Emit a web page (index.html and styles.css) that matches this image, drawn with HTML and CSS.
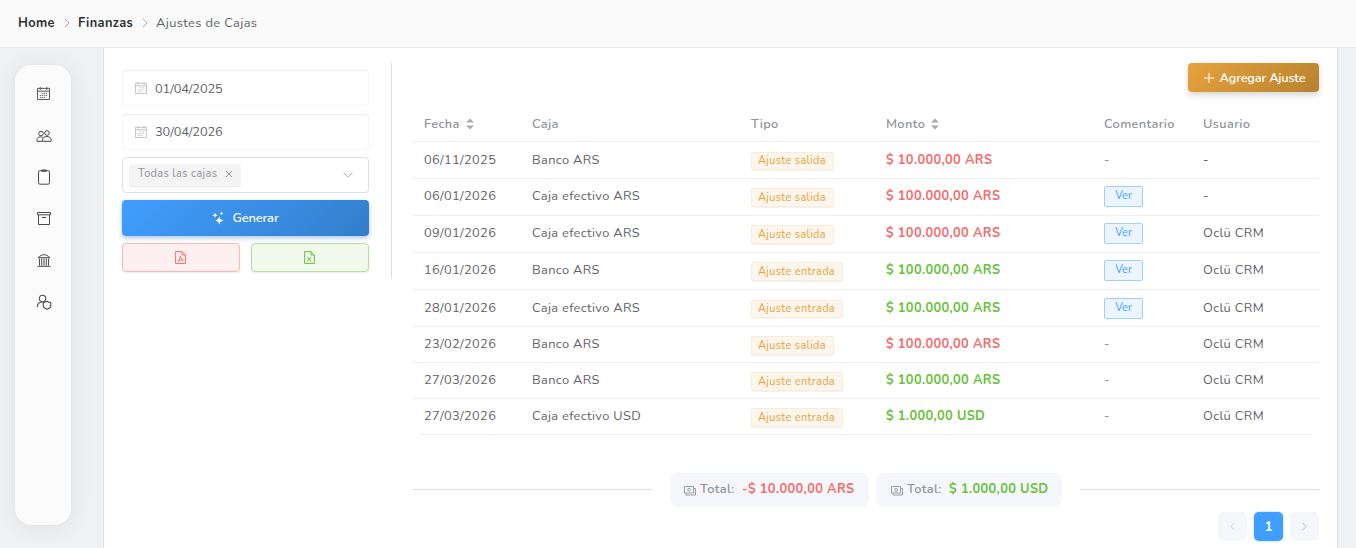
FILE: index.html
```html
<!DOCTYPE html>
<html lang="es">
<head>
<meta charset="utf-8">
<title>Ajustes de Cajas</title>
<link rel="stylesheet" href="styles.css">
</head>
<body>
<svg class="defs" width="0" height="0">
  <symbol id="cal" viewBox="0 0 14 14"><path d="M.5 1.500h13v12H.5zM.5 4.500h13M3.500 0v3M10.500 0v3" fill="none" stroke="currentColor"/><path d="M5 6.800h6.500M3 9h8.500M3 11.200h6.500" fill="none" stroke="currentColor" stroke-dasharray="1.3 .9"/></symbol>
  <symbol id="next" viewBox="0 0 6 10"><path d="M.8.8 5 5 .8 9.200" fill="none" stroke="currentColor"/></symbol>
  <symbol id="cash" viewBox="0 0 12 10"><path d="M.5.5h9v6.500h-9zM10 2.500h1.500v6.500h-9.500v-1.500" fill="none" stroke="currentColor" stroke-width=".9"/><circle cx="5" cy="3.700" r="1.400" fill="none" stroke="currentColor" stroke-width=".9"/></symbol>
  <symbol id="sort" viewBox="0 0 8 12"><path d="M0 4.600 4 .4l4 4.200zM0 7.400h8L4 11.600z" fill="#a8abb2"/></symbol>
</svg>
<header class="topbar">
  <nav class="crumbs">
    <b class="home">Home</b><svg class="sep"><use href="#next"/></svg>
    <b class="fin">Finanzas</b><svg class="sep"><use href="#next"/></svg>
    <span class="current">Ajustes de Cajas</span>
  </nav>
</header>
<div class="shell">
  <aside class="sidebar">
    <svg viewBox="0 0 14 14"><use href="#cal"/></svg>
    <svg class="wide" viewBox="0 0 16 14"><g fill="none" stroke="currentColor"><circle cx="5" cy="4.500" r="2.300"/><circle cx="11" cy="4" r="2.300"/><path d="M6.500 12.300H1v-1.500C1 8.800 2.500 7.800 4.500 7.800c1 0 1.700.2 2.300.7M6.500 12.300h8.700v-1C15.200 9 13.700 7.500 11 7.500s-4.500 1.500-4.500 3.700z"/></g></svg>
    <svg class="tall" viewBox="0 0 14 16"><rect x="1.500" y="1.700" width="11" height="13.500" rx="1.500" fill="none" stroke="currentColor"/><path d="M4.500.5h5v2.300h-5z" fill="currentColor"/></svg>
    <svg viewBox="0 0 14 14"><path d="M.5.500h13v2.300H.5zM1.500 3v9.500h11V3M5 5.500h4" fill="none" stroke="currentColor"/></svg>
    <svg viewBox="0 0 14 14"><path d="M1 3.700C3 1.800 5 .8 7 .6c2 .2 4 1.200 6 3.100zM.5 12.300h13M2.500 4.500v7M4.700 4.500v7M7 4.500v7M9.300 4.500v7M11.500 4.500v7" fill="none" stroke="currentColor"/></svg>
    <svg class="wide" viewBox="0 0 16 16"><path d="M1.300 13C1.300 9.500 3.500 8 6 8M14.800 8.500v2.800c0 2-1.500 3.200-3.800 4-2.300-.8-3.800-2-3.800-4V8.500c1.500 0 2.600-.5 3.800-1.300 1.200.8 2.300 1.300 3.800 1.300z" fill="none" stroke="currentColor" stroke-width="1.100"/><circle cx="6.500" cy="4.500" r="3.200" fill="none" stroke="currentColor" stroke-width="1.100"/></svg>
  </aside>
  <main class="card">
    <section class="filters">
      <div class="field soft"><svg class="calicon"><use href="#cal"/></svg><span class="date">01/04/2025</span></div>
      <div class="field soft"><svg class="calicon"><use href="#cal"/></svg><span class="date">30/04/2026</span></div>
      <div class="field select"><span class="chip"><span class="chiptext">Todas las cajas</span><svg class="x" viewBox="0 0 8 8"><path d="m1 1 6 6M7 1 1 7" stroke="currentColor"/></svg></span><svg class="down" viewBox="0 0 10 6"><path d="M.5.6 5 5.200 9.500.6" fill="none" stroke="currentColor"/></svg></div>
      <button class="generate"><svg viewBox="0 0 12 14"><path d="M7.300 5.500 8.500 8.300 11.500 9.500 8.500 10.700 7.300 13.500 6.100 10.700 3.300 9.500 6.100 8.300zM3 1.500l.8 2 2 .8-2 .8-.8 2-.8-2-2-.8 2-.8zM9.500.5l.6 1.400 1.400.6-1.400.6-.6 1.400-.6-1.400-1.400-.6 1.400-.6z" fill="currentColor"/></svg><span>Generar</span></button>
      <div class="exports">
        <button class="pdf"><svg viewBox="0 0 11 13"><path d="M.6.600h6.400l3.400 3.400v8.400H.6zM7 .600V4h3.400M3 10.300C4.500 9 5.300 7 5.300 4.800c.3 2.200 1.300 3.700 3 4.200-2 0-3.700.3-5.300 1.300" fill="none" stroke="currentColor"/></svg></button>
        <button class="xls"><svg viewBox="0 0 11 13"><path d="M.6.600h6.400l3.400 3.400v8.400H.6zM7 .600V4h3.400M3.300 5.800l4 4.500M7.300 5.800l-4 4.500" fill="none" stroke="currentColor"/></svg></button>
      </div>
    </section>
    <section class="content">
      <button class="add"><svg viewBox="0 0 10 10"><path d="M5 0v10M0 5h10" stroke="currentColor"/></svg><span>Agregar Ajuste</span></button>
      <div class="table">
        <div class="row head"><span>Fecha<svg class="sort"><use href="#sort"/></svg></span><span>Caja</span><span>Tipo</span><span>Monto<svg class="sort"><use href="#sort"/></svg></span><span>Comentario</span><span>Usuario</span></div>
        <div class="row"><span>06/11/2025</span><span>Banco ARS</span><span><i class="tag">Ajuste salida</i></span><span class="amount out">$ 10.000,00 ARS</span><span class="none">-</span><span>-</span></div>
        <div class="row up"><span>06/01/2026</span><span>Caja efectivo ARS</span><span><i class="tag">Ajuste salida</i></span><span class="amount out">$ 100.000,00 ARS</span><span><i class="ver">Ver</i></span><span>-</span></div>
        <div class="row up"><span>09/01/2026</span><span>Caja efectivo ARS</span><span><i class="tag">Ajuste salida</i></span><span class="amount out">$ 100.000,00 ARS</span><span><i class="ver">Ver</i></span><span>Oclü CRM</span></div>
        <div class="row up"><span>16/01/2026</span><span>Banco ARS</span><span><i class="tag in">Ajuste entrada</i></span><span class="amount plus">$ 100.000,00 ARS</span><span><i class="ver">Ver</i></span><span>Oclü CRM</span></div>
        <div class="row"><span>28/01/2026</span><span>Caja efectivo ARS</span><span><i class="tag in">Ajuste entrada</i></span><span class="amount plus">$ 100.000,00 ARS</span><span><i class="ver">Ver</i></span><span>Oclü CRM</span></div>
        <div class="row short"><span>23/02/2026</span><span>Banco ARS</span><span><i class="tag">Ajuste salida</i></span><span class="amount out">$ 100.000,00 ARS</span><span class="none">-</span><span>Oclü CRM</span></div>
        <div class="row short"><span>27/03/2026</span><span>Banco ARS</span><span><i class="tag in">Ajuste entrada</i></span><span class="amount plus">$ 100.000,00 ARS</span><span class="none">-</span><span>Oclü CRM</span></div>
        <div class="row short last"><span>27/03/2026</span><span>Caja efectivo USD</span><span><i class="tag in">Ajuste entrada</i></span><span class="amount plus">$ 1.000,00 USD</span><span class="none">-</span><span>Oclü CRM</span></div>
      </div>
      <div class="totals">
        <div class="total ars"><svg><use href="#cash"/></svg><span>Total:</span><b class="out">-$ 10.000,00 ARS</b></div>
        <div class="total usd"><svg><use href="#cash"/></svg><span>Total:</span><b class="plus">$ 1.000,00 USD</b></div>
      </div>
      <div class="pager"><button><svg class="prev"><use href="#next"/></svg></button><button class="active">1</button><button><svg><use href="#next"/></svg></button></div>
    </section>
  </main>
</div>
</body>
</html>
```
FILE: styles.css
```css
* { box-sizing: border-box; }
body { margin: 0; height: 548px; overflow: hidden; background: #f0f1f3; color: #606266; font: 12.8px/20px Nunito, Lato, sans-serif; }
svg { display: block; flex: none; }
.defs { position: absolute; }
button { font: inherit; padding: 0; border: 0; display: flex; align-items: center; justify-content: center; }
.topbar { height: 48px; background: #fafafa; border-bottom: 1px solid #ebecee; padding: 13px 18px; }
.crumbs { display: flex; align-items: center; white-space: nowrap; }
.crumbs b { color: #303133; letter-spacing: .37px; }
.home { width: 37px; }
.fin { width: 55px; }
.sep { width: 6px; height: 10px; margin: 0 8px 0 9px; color: #a8abb2; }
.current { letter-spacing: .4px; }
.shell { display: flex; height: 500px; }
.sidebar { width: 56px; height: 460px; margin: 17px 32px 0 15px; padding: 22px 0 0 1px; border-radius: 16px; background: #fbfbfb; box-shadow: 0 2px 24px rgba(0,0,0,.07), 0 0 2px rgba(0,0,0,.06); display: flex; flex-direction: column; align-items: center; gap: 27.700px; color: #4a4c50; }
.sidebar svg { width: 14px; height: 14px; }
.sidebar svg:first-child { width: 13px; height: 13px; margin-bottom: 1px; }
.sidebar .wide { width: 16px; }
.sidebar .wide:last-child, .sidebar .tall { height: 16px; margin: -1px 0; }
.card { width: 1235px; background: #fff; border: solid #dfe3e9; border-width: 0 1px; padding: 15px 18px 0; display: flex; }
.filters { width: 270px; height: 216px; padding: 7px 22px 0 0; border-right: 1px solid #dcdfe6; display: flex; flex-direction: column; }
.field { height: 36px; border-radius: 4px; display: flex; align-items: center; margin-bottom: 7.500px; }
.soft { padding-left: 13px; box-shadow: inset 0 0 3px rgba(0,0,0,.08), inset 0 1px 1px rgba(0,0,0,.05); }
.calicon { width: 12px; height: 12px; margin-right: 8px; color: #b7b9be; }
.date { padding-top: 1px; letter-spacing: -.1px; }
.select { border: 1px solid #dcdfe6; padding: 0 15px 0 6px; justify-content: space-between; margin-bottom: 7px; }
.chip { width: 112px; height: 23px; border-radius: 4px; background: #f4f4f5; border-bottom: 1px solid #e9e9eb; padding: 0 8px 1px 9px; display: flex; align-items: center; justify-content: space-between; font-size: 11px; color: #909399; white-space: nowrap; }
.chiptext { letter-spacing: .35px; }
.x { width: 8px; height: 8px; }
.down { width: 10px; height: 6px; color: #a8abb2; }
.generate { flex: none; height: 36px; border-radius: 4px; color: #fff; background: linear-gradient(135deg, #409eff, #337ecc); box-shadow: 0 2px 5px rgba(48,110,180,.4); font-weight: 600; letter-spacing: -.1px; }
.generate svg { width: 12px; height: 14px; margin-right: 8px; }
.exports { display: flex; gap: 11px; margin-top: 7px; }
.exports button { width: 118px; height: 29px; border-radius: 4px; box-shadow: 0 1px 2px rgba(0,0,0,.08); }
.exports svg { width: 11px; height: 13px; margin-right: 2px; }
.pdf { color: #f56c6c; background: #fef0f0; border: 1px solid #fab6b6; }
.xls { color: #67c23a; background: #f0f9eb; border: 1px solid #b3e19d; }
.content { width: 906px; margin-left: 21px; display: flex; flex-direction: column; }
.add { align-self: flex-end; flex: none; width: 131px; height: 29px; border-radius: 4px; color: #fff; background: linear-gradient(135deg, #e6a23c, #b88230); box-shadow: 0 3px 6px rgba(0,0,0,.17); font-weight: 600; white-space: nowrap; padding-left: 2px; letter-spacing: -.2px; }
.add svg { width: 10px; height: 10px; margin: 1px 6px 0 0; }
.table { margin-top: 14px; }
.row { display: grid; grid-template-columns: 108px 219px 135px 218px 99px 127px; height: 37px; border-bottom: 1px solid #ebeef5; align-items: center; letter-spacing: .35px; }
.row > span { padding-left: 11px; display: flex; align-items: center; white-space: nowrap; }
.head { height: 36px; color: #909399; font-weight: 600; padding-top: 1px; }
.up { padding-bottom: 2px; }
.short { height: 36px; padding-bottom: 1px; }
.last { border-color: transparent; background: linear-gradient(#ebeef5, #ebeef5) 7px 100% / 892px 1px no-repeat border-box; }
.sort { width: 8px; height: 12px; margin-left: 6px; }
.amount, .total b { font-weight: 700; }
.row > .none { color: #909399; }
.out { color: #f56c6c; }
.plus { color: #67c23a; }
.tag { font-style: normal; font-size: 11px; line-height: 15px; height: 18px; width: 83px; padding-left: 6px; margin-top: 2px; color: #e6a23c; background: #fdf6ec; border: 1px solid #faecd8; border-radius: 3px; box-shadow: 0 1px 1px rgba(0,0,0,.04); letter-spacing: .33px; }
.tag.in { width: 92px; }
.up .tag, .short .tag { height: 19px; line-height: 17px; margin-top: 3px; box-shadow: 0 1px 1px rgba(0,0,0,.06); }
.ver { font-style: normal; font-size: 11px; line-height: 18px; width: 39px; height: 21px; margin-top: 1px; text-align: center; color: #409eff; background: #ecf5ff; border: 1px solid #a0cfff; border-radius: 2px; letter-spacing: 0; }
.totals { margin-top: 38px; height: 34px; display: flex; align-items: center; gap: 7px; }
.totals::before, .totals::after { content: ""; flex: 1; height: 1px; background: #dcdfe0; margin-top: -1px; }
.totals::before { margin-right: 11px; }
.totals::after { margin-left: 11px; }
.total { height: 34px; border-radius: 8px; background: #f5f7fa; display: flex; align-items: center; padding: 0 0 2px 14px; white-space: nowrap; color: #909399; letter-spacing: .37px; font-weight: 600; }
.ars { width: 199px; }
.usd { width: 186px; padding-left: 15px; }
.total svg { width: 12px; height: 10px; margin: 4px 4px 0 0; }
.total span { width: 42px; }
.pager { margin-top: 5px; display: flex; justify-content: flex-end; gap: 7px; }
.pager button { width: 29px; height: 29px; border-radius: 5px; background: #f5f7fa; color: #a8abb2; }
.pager svg { width: 5px; height: 9px; }
.pager .prev { transform: scaleX(-1); color: #c4c7cc; }
.pager .active { background: #409eff; color: #fff; font-weight: 700; box-shadow: 0 0 2px #79bbff; }
```
